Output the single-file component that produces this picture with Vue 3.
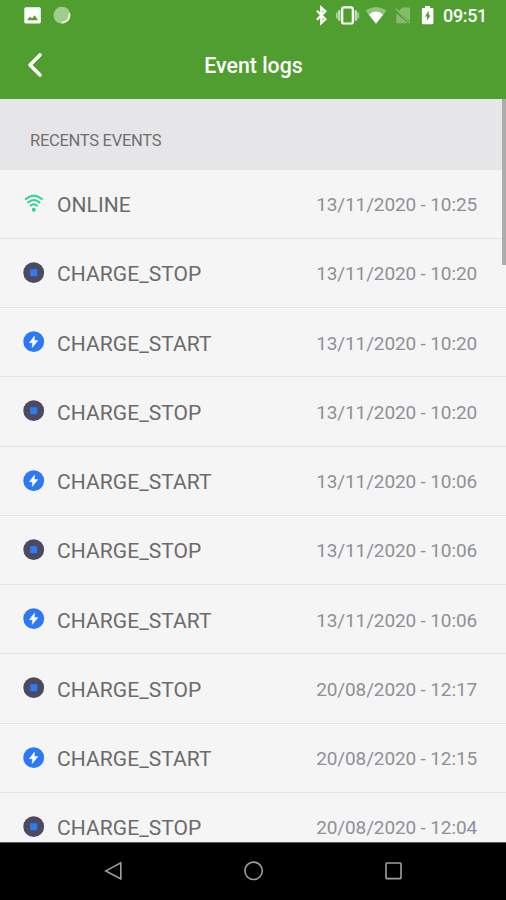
<script setup>
const events = [
  { type: 'ONLINE', date: '13/11/2020 - 10:25' },
  { type: 'CHARGE_STOP', date: '13/11/2020 - 10:20' },
  { type: 'CHARGE_START', date: '13/11/2020 - 10:20' },
  { type: 'CHARGE_STOP', date: '13/11/2020 - 10:20' },
  { type: 'CHARGE_START', date: '13/11/2020 - 10:06' },
  { type: 'CHARGE_STOP', date: '13/11/2020 - 10:06' },
  { type: 'CHARGE_START', date: '13/11/2020 - 10:06' },
  { type: 'CHARGE_STOP', date: '20/08/2020 - 12:17' },
  { type: 'CHARGE_START', date: '20/08/2020 - 12:15' },
  { type: 'CHARGE_STOP', date: '20/08/2020 - 12:04' },
]
</script>

<template>
  <div class="phone">
    <header class="top">
      <div class="status">
        <svg class="notif" width="60" height="32" viewBox="0 0 60 32">
          <path fill="#fff" fill-rule="evenodd" d="M5.8 7.2H15.2Q16.8 7.2 16.8 8.8V22Q16.8 23.6 15.2 23.6H1.9Q.3 23.6 .3 22V8.8Q.3 7.2 1.9 7.2ZM3 20.2H14L10.7 15.2L8 18.6L6 16.5Z" />
          <circle cx="38" cy="15.3" r="8.5" fill="#a2cc8d" />
          <path d="M45.4 14.2A7.6 7.6 0 0 1 38.5 22.5" fill="none" stroke="#eff7eb" stroke-width="1.8" stroke-linecap="round" />
        </svg>
        <svg class="system" width="124" height="32" viewBox="0 0 124 32">
          <path d="M3 10.8L11.3 19.3L7.3 23V7.6L11.3 11.3L3 19.8" fill="none" stroke="#fff" stroke-width="2.3" />
          <g fill="none" stroke="#fff">
            <rect x="28.2" y="7.3" width="10.6" height="16.2" rx="1.5" stroke-width="2.2" />
            <path d="M25.2 10.2V20.8M41.8 10.2V20.8" stroke-width="2.4" opacity=".65" />
            <path d="M22.8 12.5V18.5M44.2 12.5V18.5" stroke-width="1.8" opacity=".5" />
          </g>
          <path d="M51.5 10.6Q62 3.4 72.5 10.6L62 23.8Z" fill="#fff" opacity=".38" />
          <path d="M54.8 14.4Q62 8.8 69.2 14.4L62 23.8Z" fill="#fff" />
          <path d="M84.5 11.2L88.2 7.5H95Q96 7.5 96 8.5V21.3ZM82.3 13.5V22.4Q82.3 23.3 83.3 23.3H94Z" fill="#fff" opacity=".3" />
          <path d="M81.5 8.5L96 23.3" stroke="#84b968" stroke-width="1.5" />
          <path fill="#fff" fill-rule="evenodd" d="M111 6H116V8H118.3Q119.4 8 119.4 9.1V23.1Q119.4 24.2 118.3 24.2H109Q107.9 24.2 107.9 23.1V9.1Q107.9 8 109 8H111ZM114.7 10.5L111 16.5H113.1V20.8L116.5 15.2H114.7Z" />
        </svg>
        <span class="clock">09:51</span>
      </div>
      <div class="bar">
        <svg class="back" width="20" height="28" viewBox="0 0 20 28">
          <path d="M15 4L5 14L15 24" fill="none" stroke="#fff" stroke-width="3.6" stroke-linecap="round" stroke-linejoin="round" />
        </svg>
        <h1>Event logs</h1>
      </div>
    </header>
    <main class="content">
      <h2>RECENTS EVENTS</h2>
      <ul>
        <li v-for="(e, i) in events" :key="i">
          <svg class="icon" width="22" height="22" viewBox="0 0 22 22">
            <g v-if="e.type === 'ONLINE'" fill="none" stroke="#2fd495" stroke-width="2" stroke-linecap="round">
              <path d="M2.8 6.1Q10.8 -.8 18.8 6.1M5.1 9.5Q10.8 4.4 16.5 9.5M7.7 12.6Q10.8 9.9 13.9 12.6" />
              <circle cx="10.8" cy="16.7" r="2" fill="#2fd495" stroke="none" />
            </g>
            <g v-else-if="e.type === 'CHARGE_STOP'">
              <circle cx="10.7" cy="10.7" r="10.4" fill="#4a4b60" />
              <rect x="7.2" y="7.2" width="7" height="7" fill="#2f7bf6" />
            </g>
            <g v-else>
              <circle cx="10.7" cy="10.7" r="10.4" fill="#2d78f4" />
              <path d="M11.6 4.9L6.4 11.7H9.6L9.2 16.6L14.9 9.6H11.3Z" fill="#fff" stroke="#fff" stroke-width=".5" />
            </g>
          </svg>
          <span class="name">{{ e.type }}</span>
          <time>{{ e.date }}</time>
        </li>
      </ul>
      <div class="scrollbar"></div>
    </main>
    <nav>
      <svg width="22" height="22" viewBox="0 0 22 22"><path d="M18.8 2.8V19L3.8 10.9Z" /></svg>
      <svg width="22" height="22" viewBox="0 0 22 22"><circle cx="11.6" cy="10.8" r="8.7" /></svg>
      <svg width="22" height="22" viewBox="0 0 22 22"><rect x="4" y="3" width="15" height="15.6" rx=".8" /></svg>
    </nav>
  </div>
</template>

<style>
body { margin: 0; overflow: hidden; }
</style>

<style scoped>
.phone { width: 506px; height: 900px; display: flex; flex-direction: column; overflow: hidden; background: #f5f5f5; font-family: Roboto, sans-serif; }
.top { height: 98.5px; flex: none; background: #509e2f; color: #fff; }
.status { height: 32px; display: flex; align-items: center; padding: 0 19px 0 24px; }
.system { margin-left: auto; flex: none; }
.notif { flex: none; }
.clock { width: 44px; margin-left: 5px; font-size: 18px; font-weight: 500; line-height: 32px; letter-spacing: -.35px; white-space: nowrap; }
.bar { height: 66px; display: grid; grid-template-columns: 56px 1fr 56px; align-items: center; }
.back { margin-left: 25px; }
h1 { margin: 0; padding: 2px 0 0 1px; text-align: center; font-size: 21.3px; font-weight: 500; line-height: 28px; }
.content { flex: 1; min-height: 0; overflow: hidden; position: relative; }
h2 { margin: 0; height: 71px; box-sizing: border-box; padding: 31px 30px 0; background: #e6e6e8; color: #707072; font-size: 16.5px; font-weight: 400; line-height: 22px; letter-spacing: -.28px; }
ul { margin: 0; padding: 0; list-style: none; }
li { height: 69.25px; box-sizing: border-box; padding: 3px 29px 0 23px; display: flex; align-items: center; border-bottom: 1px solid #e3e3e4; }
.icon { flex: none; margin-top: -3px; }
.name { margin-left: 12px; font-size: 21px; line-height: 28px; letter-spacing: .07px; color: #6b6b6d; }
time { margin-left: auto; font-size: 19px; line-height: 28px; letter-spacing: -.13px; color: #909097; white-space: nowrap; }
.scrollbar { position: absolute; top: 0; right: 0; width: 4px; height: 166px; background: #acacad; }
nav { height: 58px; box-sizing: border-box; padding-bottom: 2px; flex: none; display: flex; justify-content: center; align-items: center; gap: 118px; background: #000; border-top: 1px solid #5a5a5a; }
nav path, nav circle, nav rect { fill: none; stroke: #a0a0a0; stroke-width: 1.6; }
</style>
